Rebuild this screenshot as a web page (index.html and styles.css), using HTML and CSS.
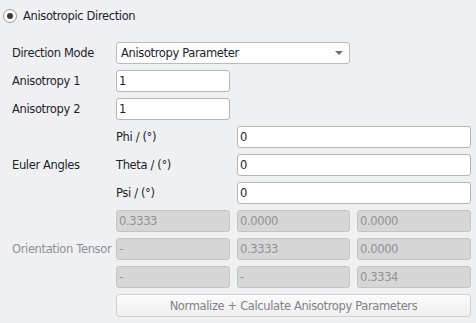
FILE: index.html
```html
<!DOCTYPE html>
<html>
<head>
<meta charset="utf-8">
<link rel="stylesheet" href="styles.css">
</head>
<body>
<div class="panel">
  <div class="radio-row">
    <span class="radio"><span class="dot"></span></span>
    <span class="radio-label">Anisotropic Direction</span>
  </div>
  <div class="grid">
    <div class="label r1">Direction Mode</div>
    <div class="select r1">
      <span>Anisotropy Parameter</span>
      <span class="arrow"></span>
    </div>

    <div class="label r2">Anisotropy 1</div>
    <div class="input c1 r2">1</div>

    <div class="label r3">Anisotropy 2</div>
    <div class="input c1 r3">1</div>

    <div class="label euler">Euler Angles</div>
    <div class="sublabel c1 r4">Phi / (°)</div>
    <div class="input wide r4">0</div>
    <div class="sublabel c1 r5">Theta / (°)</div>
    <div class="input wide r5">0</div>
    <div class="sublabel c1 r6">Psi / (°)</div>
    <div class="input wide r6">0</div>

    <div class="label disabled-label tensor">Orientation Tensor</div>
    <div class="input dis c1 r7">0.3333</div>
    <div class="input dis c2 r7">0.0000</div>
    <div class="input dis c3 r7">0.0000</div>
    <div class="input dis c1 r8">-</div>
    <div class="input dis c2 r8">0.3333</div>
    <div class="input dis c3 r8">0.0000</div>
    <div class="input dis c1 r9">-</div>
    <div class="input dis c2 r9">-</div>
    <div class="input dis c3 r9">0.3334</div>

    <div class="button r10">Normalize + Calculate Anisotropy Parameters</div>
  </div>
</div>
</body>
</html>
```

FILE: styles.css
```css
html, body {
  margin: 0;
  padding: 0;
  background: #eff0f2;
}
body {
  font-family: "DejaVu Sans", sans-serif;
  font-size: 11.5px;
  letter-spacing: -0.36px;
  color: #1c1f2e;
  width: 476px;
  height: 323px;
  overflow: hidden;
}
.panel {
  padding: 9px 5px 0 3px;
}
.radio-row {
  display: flex;
  align-items: center;
  height: 14px;
}
.radio {
  width: 12px;
  height: 12px;
  border: 1px solid #9a9a9a;
  border-radius: 50%;
  background: #fbfbfb;
  display: flex;
  align-items: center;
  justify-content: center;
}
.dot {
  width: 6px;
  height: 6px;
  border-radius: 50%;
  background: #3a3a3a;
}
.radio-label {
  margin-left: 6px;
}
.grid {
  margin-top: 19px;
  margin-left: 9px;
  display: grid;
  grid-template-columns: 97px 114px 113px 114px;
  column-gap: 7px;
  row-gap: 6px;
  grid-auto-rows: 22px;
}
.label {
  grid-column: 1;
  display: flex;
  align-items: center;
  white-space: nowrap;
}
.disabled-label { color: #8b9099; }
.r1 { grid-row: 1; }
.r2 { grid-row: 2; }
.r3 { grid-row: 3; }
.r4 { grid-row: 4; }
.r5 { grid-row: 5; }
.r6 { grid-row: 6; }
.r7 { grid-row: 7; }
.r8 { grid-row: 8; }
.r9 { grid-row: 9; }
.r10 { grid-row: 10; }
.c1 { grid-column: 2; }
.c2 { grid-column: 3; }
.c3 { grid-column: 4; }
.wide { grid-column: 3 / 5; }
.euler { grid-row: 4 / 7; }
.tensor { grid-row: 7 / 10; }
.sublabel {
  display: flex;
  align-items: center;
}
.select {
  grid-column: 2 / 4;
  box-sizing: border-box;
  border: 1px solid #b9bbbe;
  border-radius: 3px;
  background: #fdfdfd;
  display: flex;
  align-items: center;
  justify-content: space-between;
  padding: 0 6px 0 4px;
}
.arrow {
  width: 0;
  height: 0;
  border-left: 4px solid transparent;
  border-right: 4px solid transparent;
  border-top: 4px solid #6e6e6e;
}
.input {
  box-sizing: border-box;
  border: 1px solid #b4b6b9;
  border-radius: 3px;
  background: #ffffff;
  display: flex;
  align-items: center;
  padding-left: 2px;
}
.input.dis {
  background: #d6d6d6;
  border-color: #c4c4c4;
  color: #8f9298;
}
.button {
  grid-column: 2 / 5;
  box-sizing: border-box;
  height: 23px;
  border: 1px solid #d0d0d0;
  border-radius: 3px;
  background: linear-gradient(#fbfbfb, #efefef);
  color: #80838a;
  display: flex;
  align-items: center;
  justify-content: center;
}
```
